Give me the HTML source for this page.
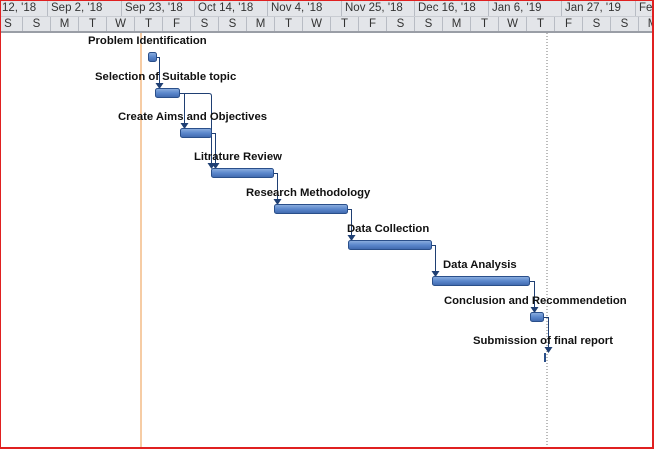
<!DOCTYPE html>
<html><head><meta charset="utf-8"><style>
html,body{margin:0;padding:0;background:#fff}
body{width:654px;height:449px;position:relative;overflow:hidden;font-family:"Liberation Sans",sans-serif}
.frame{position:absolute;left:0;top:0;width:651px;height:446px;border:1px solid #e02020;border-right:2px solid #e02020;border-bottom:2px solid #e02020}
.h1,.h2{position:absolute;left:0;width:654px;background:#e3e5e9;color:#333;font-size:11.5px}
.h1{top:1px;height:15px;border-bottom:1px solid #c9ccd2}
.h2{top:17px;height:14px;border-bottom:2px solid #9a9ea6}
.c{position:absolute;top:0;height:100%;border-left:1px solid #b8bcc4;box-sizing:border-box;line-height:14px;white-space:nowrap;overflow:hidden}
.h2 .c{text-align:center}
.h1 .c{padding-left:3px}
.lb{position:absolute;font-weight:bold;font-size:11.3px;color:#111;white-space:nowrap;line-height:13px}
</style></head><body>
<div class="h1">
<div class="c" style="left:-1px;width:48px;border-left:none">12, '18</div>
<div class="c" style="left:47px;width:74px">Sep 2, '18</div>
<div class="c" style="left:121px;width:73px">Sep 23, '18</div>
<div class="c" style="left:194px;width:73px">Oct 14, '18</div>
<div class="c" style="left:267px;width:74px">Nov 4, '18</div>
<div class="c" style="left:341px;width:73px">Nov 25, '18</div>
<div class="c" style="left:414px;width:74px">Dec 16, '18</div>
<div class="c" style="left:488px;width:73px">Jan 6, '19</div>
<div class="c" style="left:561px;width:74px">Jan 27, '19</div>
<div class="c" style="left:635px;width:40px">Feb</div>
</div>
<div class="h2">
<div class="c" style="left:-6px;width:28px;border-left:none">S</div>
<div class="c" style="left:22px;width:28px">S</div>
<div class="c" style="left:50px;width:28px">M</div>
<div class="c" style="left:78px;width:28px">T</div>
<div class="c" style="left:106px;width:28px">W</div>
<div class="c" style="left:134px;width:28px">T</div>
<div class="c" style="left:162px;width:28px">F</div>
<div class="c" style="left:190px;width:28px">S</div>
<div class="c" style="left:218px;width:28px">S</div>
<div class="c" style="left:246px;width:28px">M</div>
<div class="c" style="left:274px;width:28px">T</div>
<div class="c" style="left:302px;width:28px">W</div>
<div class="c" style="left:330px;width:28px">T</div>
<div class="c" style="left:358px;width:28px">F</div>
<div class="c" style="left:386px;width:28px">S</div>
<div class="c" style="left:414px;width:28px">S</div>
<div class="c" style="left:442px;width:28px">M</div>
<div class="c" style="left:470px;width:28px">T</div>
<div class="c" style="left:498px;width:28px">W</div>
<div class="c" style="left:526px;width:28px">T</div>
<div class="c" style="left:554px;width:28px">F</div>
<div class="c" style="left:582px;width:28px">S</div>
<div class="c" style="left:610px;width:28px">S</div>
<div class="c" style="left:638px;width:28px">M</div>
</div>
<svg width="654" height="449" style="position:absolute;left:0;top:0">
<defs><linearGradient id="g" x1="0" y1="0" x2="0" y2="1">
<stop offset="0" stop-color="#8fb1e0"/><stop offset="0.5" stop-color="#5b87cc"/><stop offset="1" stop-color="#3f68ad"/></linearGradient></defs>
<line x1="141" y1="33" x2="141" y2="447" stroke="#ec9a4a" stroke-width="1"/>
<line x1="547" y1="33" x2="547" y2="447" stroke="#777" stroke-width="1" stroke-dasharray="1,2"/>
<g fill="none" stroke="#1f3f73" stroke-width="1">
<path d="M157,57.5 H159.5 V84"/>
<path d="M180,93.5 H184.5 V124"/>
<path d="M180,93.5 H209 Q211.5,93.5 211.5,96 V164"/>
<path d="M212,133.5 H215.5 V164"/>
<path d="M274,173.5 H277.5 V200"/>
<path d="M348,209.5 H351.5 V236"/>
<path d="M432,245.5 H435.5 V272"/>
<path d="M530,281.5 H534.5 V308"/>
<path d="M544,317.5 H548.5 V348"/>
</g>
<g fill="#1f3f73">
<path d="M155.5,83 h8 l-4,6z"/>
<path d="M180.5,123 h8 l-4,6z"/>
<path d="M207.5,163 h8 l-4,6z"/>
<path d="M211.5,163 h8 l-4,6z"/>
<path d="M273.5,199 h8 l-4,6z"/>
<path d="M347.5,235 h8 l-4,6z"/>
<path d="M431.5,271 h8 l-4,6z"/>
<path d="M530.5,307 h8 l-4,6z"/>
<path d="M544.5,347 h8 l-4,6z"/>
</g>
<g fill="url(#g)" stroke="#2a4f8a" stroke-width="1">
<rect x="148.5" y="52.5" width="8" height="9" rx="2"/>
<rect x="155.5" y="88.5" width="24" height="9" rx="2"/>
<rect x="180.5" y="128.5" width="31" height="9" rx="2"/>
<rect x="211.5" y="168.5" width="62" height="9" rx="2"/>
<rect x="274.5" y="204.5" width="73" height="9" rx="2"/>
<rect x="348.5" y="240.5" width="83" height="9" rx="2"/>
<rect x="432.5" y="276.5" width="97" height="9" rx="2"/>
<rect x="530.5" y="312.5" width="13" height="9" rx="2"/>
</g>
<rect x="544" y="353" width="2" height="9" fill="#2a4f8a"/>
</svg>
<div class="lb" style="left:88px;top:35px">Problem Identification</div>
<div class="lb" style="left:95px;top:71px">Selection of Suitable topic</div>
<div class="lb" style="left:118px;top:111px">Create Aims and Objectives</div>
<div class="lb" style="left:194px;top:151px">Litrature Review</div>
<div class="lb" style="left:246px;top:187px">Research Methodology</div>
<div class="lb" style="left:347px;top:223px">Data Collection</div>
<div class="lb" style="left:443px;top:259px">Data Analysis</div>
<div class="lb" style="left:444px;top:295px">Conclusion and Recommendetion</div>
<div class="lb" style="left:473px;top:335px">Submission of final report</div>
<div class="frame"></div>
</body></html>
